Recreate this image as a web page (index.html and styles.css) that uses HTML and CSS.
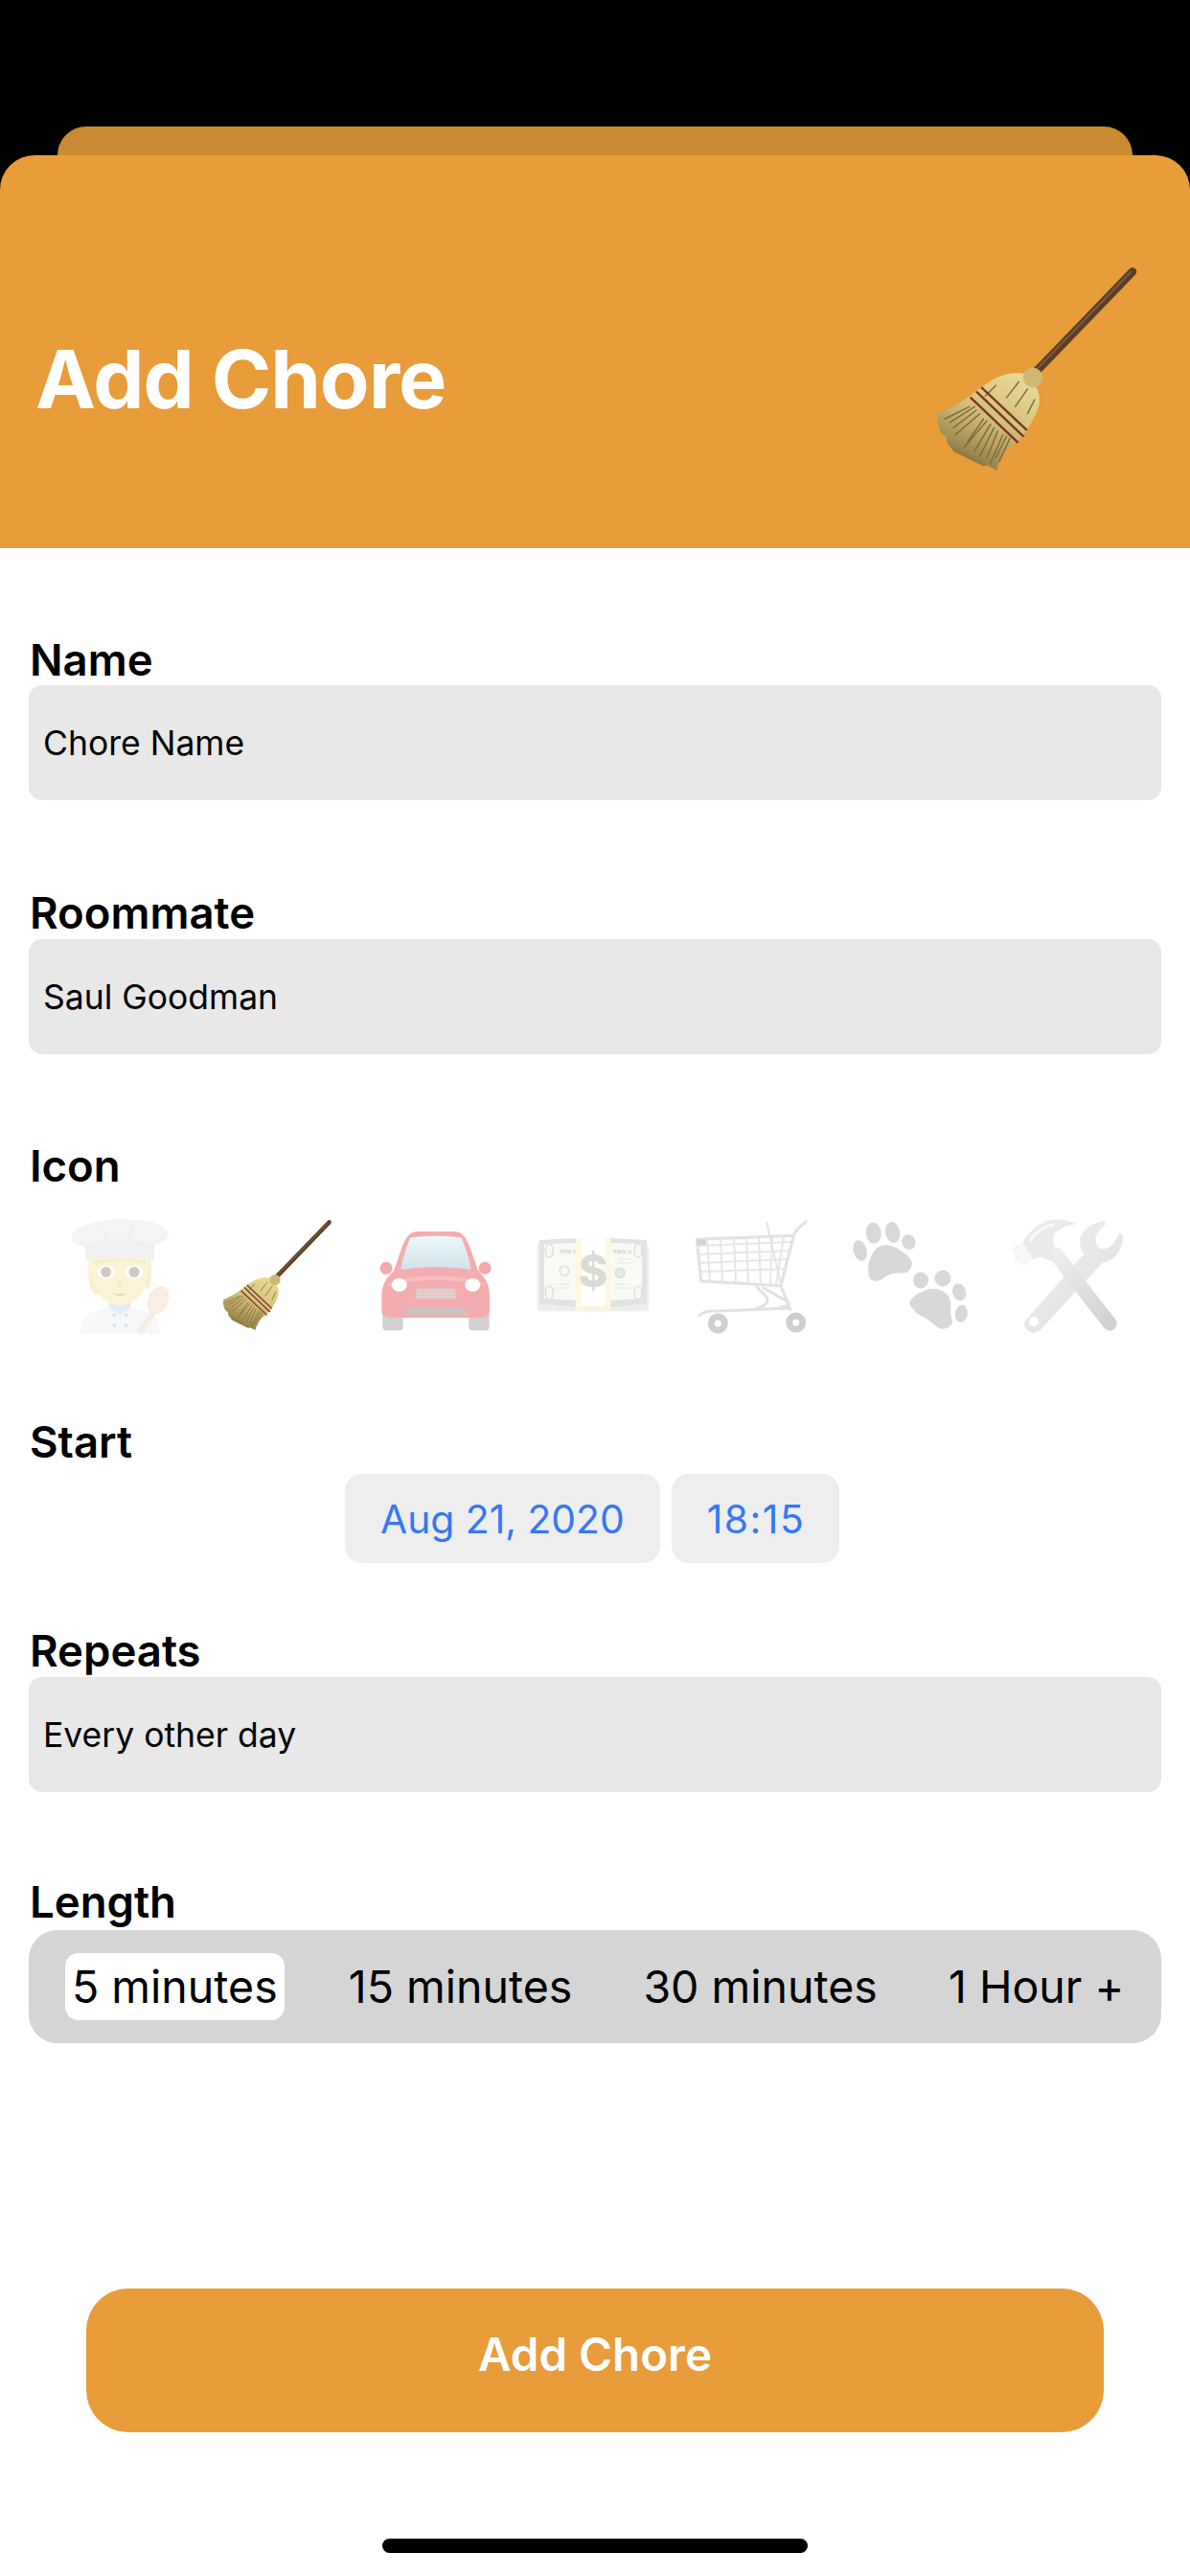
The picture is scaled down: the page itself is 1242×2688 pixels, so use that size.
FILE: index.html
```html
<!DOCTYPE html>
<html lang="en">
<head>
<meta charset="utf-8">
<title>Add Chore</title>
<link rel="stylesheet" href="styles.css">
</head>
<body>
<svg class="defs" width="0" height="0" aria-hidden="true">
  <defs>
    <linearGradient id="straw" x1="0.75" y1="0" x2="0.2" y2="1">
      <stop offset="0" stop-color="#e8da97"/>
      <stop offset="0.45" stop-color="#d3bf7b"/>
      <stop offset="0.8" stop-color="#9d8a50"/>
      <stop offset="1" stop-color="#5e5129"/>
    </linearGradient>
    <linearGradient id="steel" x1="0" y1="0" x2="1" y2="1">
      <stop offset="0" stop-color="#e4e4e7"/>
      <stop offset="1" stop-color="#a8a8ab"/>
    </linearGradient>
    <linearGradient id="handle" gradientUnits="userSpaceOnUse" x1="47" y1="37" x2="103" y2="109">
      <stop offset="0" stop-color="#d6d6da"/>
      <stop offset="1" stop-color="#8f8f92"/>
    </linearGradient>
    <linearGradient id="glass" x1="0" y1="0" x2="0" y2="1">
      <stop offset="0" stop-color="#d6f0f8"/>
      <stop offset="1" stop-color="#8fb9cf"/>
    </linearGradient>
    <symbol id="broom" viewBox="0 0 120 120">
      <path class="b-stick" d="M113.500 3.500 58.300 60.700"/>
      <path class="b-stick-hi" d="M112.500 3.800 58 60"/>
      <path fill="url(#straw)" d="M52.300 61.200C47 60.600 43 60.800 38 63 33 65 28 68.700 25 71 20 75 13.200 79.900 2.400 84.500L3.600 86 2.600 87.400 4.800 94.800 8 97.500 8.400 100.600 12.300 105.500 24.400 111.500 29 113.800 31 113.200 36.500 116 37.400 112.500 39.300 107 43 103.500 47.700 100C52 96 55 92 56 89.200 59 84 61 80 60.700 76.100 60.800 72 59.400 69.500 58 68.700Z"/>
      <path class="b-fibre" d="M49 66 42 75M54 70 47 80M36 68 30 74M58 76 54 84M24 80 10 89M27 84 13 96M31 88 18 103M35 92 27 108M40 96 33 112M44 98 38 111M21 80 7 87M29 87 20 100M37 94 31 109M33 90 24 105M25 82 12 92M42 97 36 109"/>
      <circle class="b-knob" cx="57" cy="63.500" r="5.600"/>
      <path class="b-band" d="M27.800 69 53.600 93.300M25 71.500 51.800 97M21.600 74.700 48.600 100.400"/>
    </symbol>
  </defs>
</svg>

<main class="screen">
  <div class="back-sheet"></div>
  <header class="hero">
    <h1 class="hero-title">Add Chore</h1>
    <svg class="hero-broom" viewBox="0 0 120 120" role="img" aria-label="broom"><use href="#broom"/></svg>
  </header>

  <form class="form">
    <section class="group group-name">
      <h2 class="label">Name</h2>
      <div class="field">Chore Name</div>
    </section>

    <section class="group group-roommate">
      <h2 class="label">Roommate</h2>
      <div class="field">Saul Goodman</div>
    </section>

    <section class="group group-icon">
      <h2 class="label">Icon</h2>
      <div class="icons">
        <svg class="emoji faded" viewBox="0 0 120 120" role="img" aria-label="cook">
          <path fill="#f0f0f0" d="M18 120C19 104 24 97 46 93H74C96 97 101 104 102 120Z"/>
          <path fill="#bcd6f2" d="M48 92 60 100 72 92 71 88H49Z"/>
          <g fill="#8fb2ea"><circle cx="54.300" cy="100" r="1.800"/><circle cx="66.700" cy="100" r="1.800"/><circle cx="54.300" cy="111" r="1.800"/><circle cx="66.700" cy="111" r="1.800"/></g>
          <path fill="#f3da84" d="M28 42C26 60 27 72 35 80L46 70 80 40Z"/>
          <path fill="#f3da84" d="M92 42C94 56 93 66 90 74L76 60 60 40Z"/>
          <path fill="#fae696" d="M30 48C30 38 44 36 60 36 76 36 90 38 90 48 90 76 76 90 60 90 44 90 30 76 30 48Z"/>
          <path fill="#f2d67c" d="M32 40H88L86 48C78 44 72 44 68 42 58 46 44 44 34 49Z"/>
          <ellipse fill="#fff" cx="45.700" cy="55.300" rx="9" ry="6.500"/>
          <ellipse fill="#fff" cx="75" cy="55.300" rx="9" ry="6.500"/>
          <circle fill="#8a7a68" cx="45.700" cy="55.300" r="5.500"/>
          <circle fill="#8a7a68" cx="75" cy="55.300" r="5.500"/>
          <path fill="#f5d273" d="M57 66C58 63 62 63 63 66 64 69 62 71 60 71 58 71 56 69 57 66Z"/>
          <path fill="#97836c" d="M53 77C57 79 63 79 67 77 65 81 55 81 53 77Z"/>
          <path class="spoon-stick" d="M96 96 80 119"/>
          <ellipse fill="#f3d3b8" cx="100" cy="84.700" rx="10.500" ry="15" transform="rotate(25 100 84.700)"/>
          <path fill="#e6e6e6" d="M24 44V28C14 28 8 23 10 17 12 11 20 7 28 5 44 -1 74 -1 92 3 104 6 112 11 111 16 110 21 105 25 96 27V44C76 40 44 40 24 44Z"/>
          <path fill="#dadada" d="M24 28C44 19 76 19 96 28V42C76 38 44 38 24 42Z"/>
          <path class="hat-fold" d="M40 6C44 12 46 17 46 22M74 6C72 12 70 17 70 22"/>
        </svg>

        <svg class="emoji" viewBox="0 0 120 120" role="img" aria-label="broom"><use href="#broom"/></svg>

        <svg class="emoji faded" viewBox="0 0 120 120" role="img" aria-label="car">
          <rect fill="#8f8f8f" x="4.300" y="92" width="21.400" height="24.300" rx="4"/>
          <rect fill="#8f8f8f" x="94.300" y="92" width="21.400" height="24.300" rx="4"/>
          <circle fill="#e02a30" cx="8" cy="51.300" r="6.500"/>
          <circle fill="#e02a30" cx="111" cy="51.300" r="6.500"/>
          <path fill="#e6343a" d="M41.700 13H78.300C88 13 92 19 97 34L104 54C112 62 116 68 116 82V96C116 101 112 103 106 103H14C8 103 3.300 101 3.300 96V82C3.300 68 8 62 16 54L23 34C28 19 32 13 41.700 13Z"/>
          <path fill="url(#glass)" d="M33 19.700C44 17 76 17 86.700 19.700 91 30 95 42 96.700 53 72 49 48 49 23.300 53 25 42 29 30 33 19.700Z"/>
          <path fill="#ef5f60" d="M8 70C20 56 100 56 112 70 90 62 30 62 8 70Z"/>
          <ellipse fill="#fff" cx="98.300" cy="68.700" rx="8" ry="7"/>
          <ellipse fill="#fff" cx="21.700" cy="68.700" rx="8" ry="7"/>
          <rect fill="#b07474" x="39" y="72" width="42" height="12" rx="3"/>
          <path class="car-grille" d="M40 75H80M40 78H80M40 81H80"/>
          <rect fill="#7a6a6a" x="29" y="93" width="62" height="6.700" rx="3"/>
        </svg>

        <svg class="emoji faded-money" viewBox="0 0 120 120" role="img" aria-label="money">
          <rect fill="#c8c8c4" x="0.700" y="26" width="116.600" height="70.300" rx="4"/>
          <path fill="#a5a5a1" d="M3 22 41 20V92L3 88ZM115 22 77 20V92L115 88Z"/>
          <path fill="#eef1e0" d="M8 26 41 25V85L8 83ZM110 26 77 25V85L110 83Z"/>
          <g class="bill-ring">
            <ellipse cx="13.300" cy="33" rx="4" ry="7"/><ellipse cx="13.300" cy="77" rx="4" ry="7"/>
            <ellipse cx="106" cy="33" rx="4" ry="7"/><ellipse cx="106" cy="77" rx="4" ry="7"/>
            <circle cx="29" cy="54" r="5"/>
          </g>
          <circle class="bill-seal" cx="87.300" cy="56.300" r="5"/>
          <text class="bill-small" x="24" y="36">THE UN</text>
          <text class="bill-small" x="80" y="36">ERICA</text>
          <path class="bill-line" d="M18 68H36M18 72H34M82 72H100M82 68H98M85 42H100M85 46H98"/>
          <rect fill="#fbe9a4" x="40.700" y="20" width="36.600" height="76.300"/>
          <rect fill="#fff" x="47" y="20" width="24" height="76.300"/>
          <rect fill="#e9dfa8" x="40.700" y="91" width="36.600" height="5.300"/>
          <text class="bill-dollar" x="59" y="71">$</text>
        </svg>

        <svg class="emoji faded" viewBox="0 0 120 120" role="img" aria-label="shopping cart">
          <path class="cart-grid" d="M3 28 101 24M4 37 99 33M5 46 97 42M6 55 94 52M13 21 16 66M27 21 29 67M41 20 43 68M54 20 56 68M67 19 69 69M81 18 79 69M93 18 85 69"/>
          <path class="cart-frame" d="M2.300 21.300 103.300 17.300 90 69.700 6.700 64.700ZM103.300 17.300C105 11 110 8 116 3"/>
          <path class="cart-thin" d="M75 3 90 68"/>
          <rect fill="#8a94a4" x="2.300" y="21.300" width="9.400" height="6"/>
          <path class="cart-frame" d="M90 70 100 94.700M5 100.700C9 97 12 96.300 16.700 96.300L98.300 93M65 71.300 74 80C78 85 76 90 65 93M72 72 95 85C100 88 99 91 90 92"/>
          <circle class="cart-wheel" cx="24.300" cy="109" r="7"/>
          <circle class="cart-wheel" cx="105.700" cy="108" r="7"/>
        </svg>

        <svg class="emoji faded" viewBox="0 0 120 120" role="img" aria-label="paw prints">
          <g fill="#a0a0a0">
            <ellipse cx="7.700" cy="33" rx="7" ry="11" transform="rotate(-15 7.700 33)"/>
            <ellipse cx="21.700" cy="14.700" rx="8" ry="11" transform="rotate(-5 21.700 14.700)"/>
            <ellipse cx="41.700" cy="14" rx="7.500" ry="11" transform="rotate(-12 41.700 14)"/>
            <ellipse cx="58.300" cy="24" rx="7" ry="8" transform="rotate(-25 58.300 24)"/>
            <path d="M30 28C37 26 45 29 50 33 56 37 61.700 41 61.700 46.300 61.700 53 57 56 53.300 56.300 47 57 43 56 38.300 58 33 60.500 29 64.700 25 64.700 20 64.700 16.700 62 16.700 58 15.500 52 16 46 18.300 41.300 21 34 25 29 30 28Z"/>
            <ellipse cx="71" cy="64" rx="8" ry="8.500"/>
            <ellipse cx="94" cy="62" rx="8.500" ry="8.500"/>
            <ellipse cx="111" cy="76.300" rx="7" ry="9" transform="rotate(-15 111 76.300)"/>
            <ellipse cx="113.300" cy="98.700" rx="6.500" ry="9" transform="rotate(10 113.300 98.700)"/>
            <path d="M86.700 73C94 74 100 78 101.700 84.700 103 91 101 98 104 106.300 104 112 98 115 93.300 114.700 88 114 85 110 80 106.300 75 102 69 101 65 96.300 60.500 92 58.500 88 60 86.300 62 81 70 76.300 71.700 76.300 76 74 81 72 86.700 73Z"/>
          </g>
        </svg>

        <svg class="emoji faded" viewBox="0 0 120 120" role="img" aria-label="hammer and wrench">
          <path fill="url(#steel)" d="M96.700 2C86 5 80 8 78.300 11.300 73 16 71 20 72.300 24.700 72 30 74 34 76.700 36.300L15 106.300C13 110 14.500 114 18 116.500 21 119 25 119 27 117.500 30 116 32 115 33.300 113L95 46.300C103 44 110 40 113 33 116 27 117.500 21 116.700 17.300 116 15 114.500 14.500 113.300 15.300 111 20 108 25 105 28 101 31 96 32 93.300 30.700 90 29 88 24 88.300 19.700 90 14 94 10 98.300 6.300 99 4 98 2 96.700 2Z"/>
          <circle fill="#fff" cx="24" cy="107" r="5"/>
          <path class="hammer-handle" d="M47 37 103 109"/>
          <path fill="#cfcfd3" d="M12 25C18 14 28 5 40 1.500 50 -1 60 1 68.300 5.300 58 7 50 10 45 16 43 22 45 28 47 32L44 44 36 42C34 38 28 40 22 43Z"/>
          <path fill="#ececef" d="M1.700 30 12 24 24 42 14 49 5 44Z"/>
          <path class="hammer-shine" d="M20 22C26 14 34 8 44 6"/>
        </svg>
      </div>
    </section>

    <section class="group group-start">
      <h2 class="label">Start</h2>
      <div class="pickers">
        <div class="pill">Aug 21, 2020</div>
        <div class="pill pill-time">18:15</div>
      </div>
    </section>

    <section class="group group-repeats">
      <h2 class="label">Repeats</h2>
      <div class="field">Every other day</div>
    </section>

    <section class="group group-length">
      <h2 class="label">Length</h2>
      <div class="segments">
        <div class="segment selected">5 minutes</div>
        <div class="segment">15 minutes</div>
        <div class="segment">30 minutes</div>
        <div class="segment">1 Hour +</div>
      </div>
    </section>

    <button class="submit" type="button">Add Chore</button>
    <div class="home-indicator"></div>
  </form>
</main>
</body>
</html>
```

FILE: styles.css
```css
* { box-sizing: border-box; }

html, body { margin: 0; padding: 0; background: #000; }

body {
  width: 1242px;
  height: 2688px;
  overflow: hidden;
  font-family: Inter, "Liberation Sans", sans-serif;
  color: #000;
}

.defs { position: absolute; }

.screen {
  width: 1242px;
  height: 2688px;
  padding-top: 132px;
  display: flex;
  flex-direction: column;
  overflow: hidden;
}

.back-sheet {
  flex: none;
  height: 30px;
  margin: 0 60px;
  background: #cb8a32;
  border-radius: 30px 30px 0 0;
}

.hero {
  flex: none;
  height: 410px;
  background: #e89c3a;
  border-radius: 36px 36px 0 0;
  padding: 0 48px 74px 37px;
  display: flex;
  justify-content: space-between;
  align-items: flex-end;
}

.hero-title {
  margin: 0 0 53px;
  font-size: 84.500px;
  line-height: 100px;
  font-weight: 700;
  letter-spacing: -1px;
  color: #fff;
}

.hero-broom { width: 221px; height: 221px; display: block; }

.form {
  flex: 1;
  background: #fff;
  display: flex;
  flex-direction: column;
}

.group { display: flex; flex-direction: column; padding: 0 30px; }

.label {
  margin: 0;
  padding-left: 1px;
  font-size: 45.500px;
  line-height: 40px;
  font-weight: 600;
}

.group-name { margin-top: 97px; gap: 6px; }
.group-roommate { margin-top: 98px; gap: 7px; }
.group-icon { margin-top: 97px; gap: 35px; }
.group-start { margin-top: 93px; gap: 13px; }
.group-repeats { margin-top: 72px; gap: 7px; }
.group-length { margin-top: 95px; gap: 9px; }

.field {
  height: 120px;
  background: #e8e8e8;
  border-radius: 14px;
  padding: 0 15px;
  display: flex;
  align-items: center;
  font-size: 35.500px;
}

.icons { display: flex; gap: 45px; padding-left: 35px; }

.emoji { width: 120px; height: 120px; display: block; flex: none; overflow: visible; }
.faded { opacity: 0.4; }
.faded-money { opacity: 0.3; }

.pickers { display: flex; gap: 12px; padding-left: 330px; }

.pill {
  height: 93px;
  padding: 0 37px;
  background: #eeeeef;
  border-radius: 18px;
  display: flex;
  align-items: center;
  font-size: 40.800px;
  color: #3478f6;
}

.pill-time { letter-spacing: 1.500px; padding: 0 36px 0 37px; }

.segments {
  height: 118px;
  background: #d5d5d5;
  border-radius: 30px;
  padding: 0 0 0 38px;
  display: flex;
  align-items: center;
  gap: 60px;
}

.segment {
  height: 70px;
  padding: 0 7px;
  border-radius: 14px;
  display: flex;
  align-items: center;
  font-size: 46.500px;
  white-space: nowrap;
}

.selected { background: #fff; }

.submit {
  display: block;
  align-self: center;
  width: 1062px;
  height: 150px;
  margin-top: 256px;
  padding: 0 0 14px;
  background: #e89c3a;
  border: 0;
  border-radius: 44px;
  color: #fff;
  font-family: inherit;
  font-size: 47.500px;
  font-weight: 600;
}

.home-indicator {
  flex: none;
  align-self: center;
  width: 444px;
  height: 15px;
  margin-top: 111px;
  background: #000;
  border-radius: 7.500px;
}

/* Emoji details */
.b-stick { fill: none; stroke: #5b3d24; stroke-width: 4.600; stroke-linecap: round; }
.b-stick-hi { fill: none; stroke: #7a5a3a; stroke-width: 1.200; stroke-linecap: round; }
.b-fibre { fill: none; stroke: #7d6c3a; stroke-width: 0.800; stroke-linecap: round; }
.b-knob { fill: #cdb974; }
.b-band { fill: none; stroke: #7d3527; stroke-width: 1.300; }

.hat-fold { fill: none; stroke: #cfcfcf; stroke-width: 1; }
.spoon-stick { fill: none; stroke: #f3d3b8; stroke-width: 6; }
.car-grille { fill: none; stroke: #d9a0a0; stroke-width: 1; }

.bill-ring { fill: #eef1e0; stroke: #888; stroke-width: 1.200; }
.bill-seal { fill: #9cc7a0; stroke: #5f9a70; stroke-width: 1.200; }
.bill-small { font-family: "Liberation Serif", serif; font-size: 6px; font-weight: 700; fill: #555; }
.bill-line { fill: none; stroke: #999; stroke-width: 0.800; }
.bill-dollar { font-family: Inter, sans-serif; font-size: 46px; font-weight: 800; fill: #8d8a6a; text-anchor: middle; }

.cart-grid { fill: none; stroke: #c4c4c4; stroke-width: 2; }
.cart-frame { fill: none; stroke: #b8b8b8; stroke-width: 3; stroke-linecap: round; stroke-linejoin: round; }
.cart-thin { fill: none; stroke: #b8b8b8; stroke-width: 1.600; }
.cart-wheel { fill: #fff; stroke: #8a8a8a; stroke-width: 7; }

.hammer-handle { fill: none; stroke: url(#handle); stroke-width: 15; stroke-linecap: round; }
.hammer-shine { fill: none; stroke: #f2f2f4; stroke-width: 3; stroke-linecap: round; }
```
